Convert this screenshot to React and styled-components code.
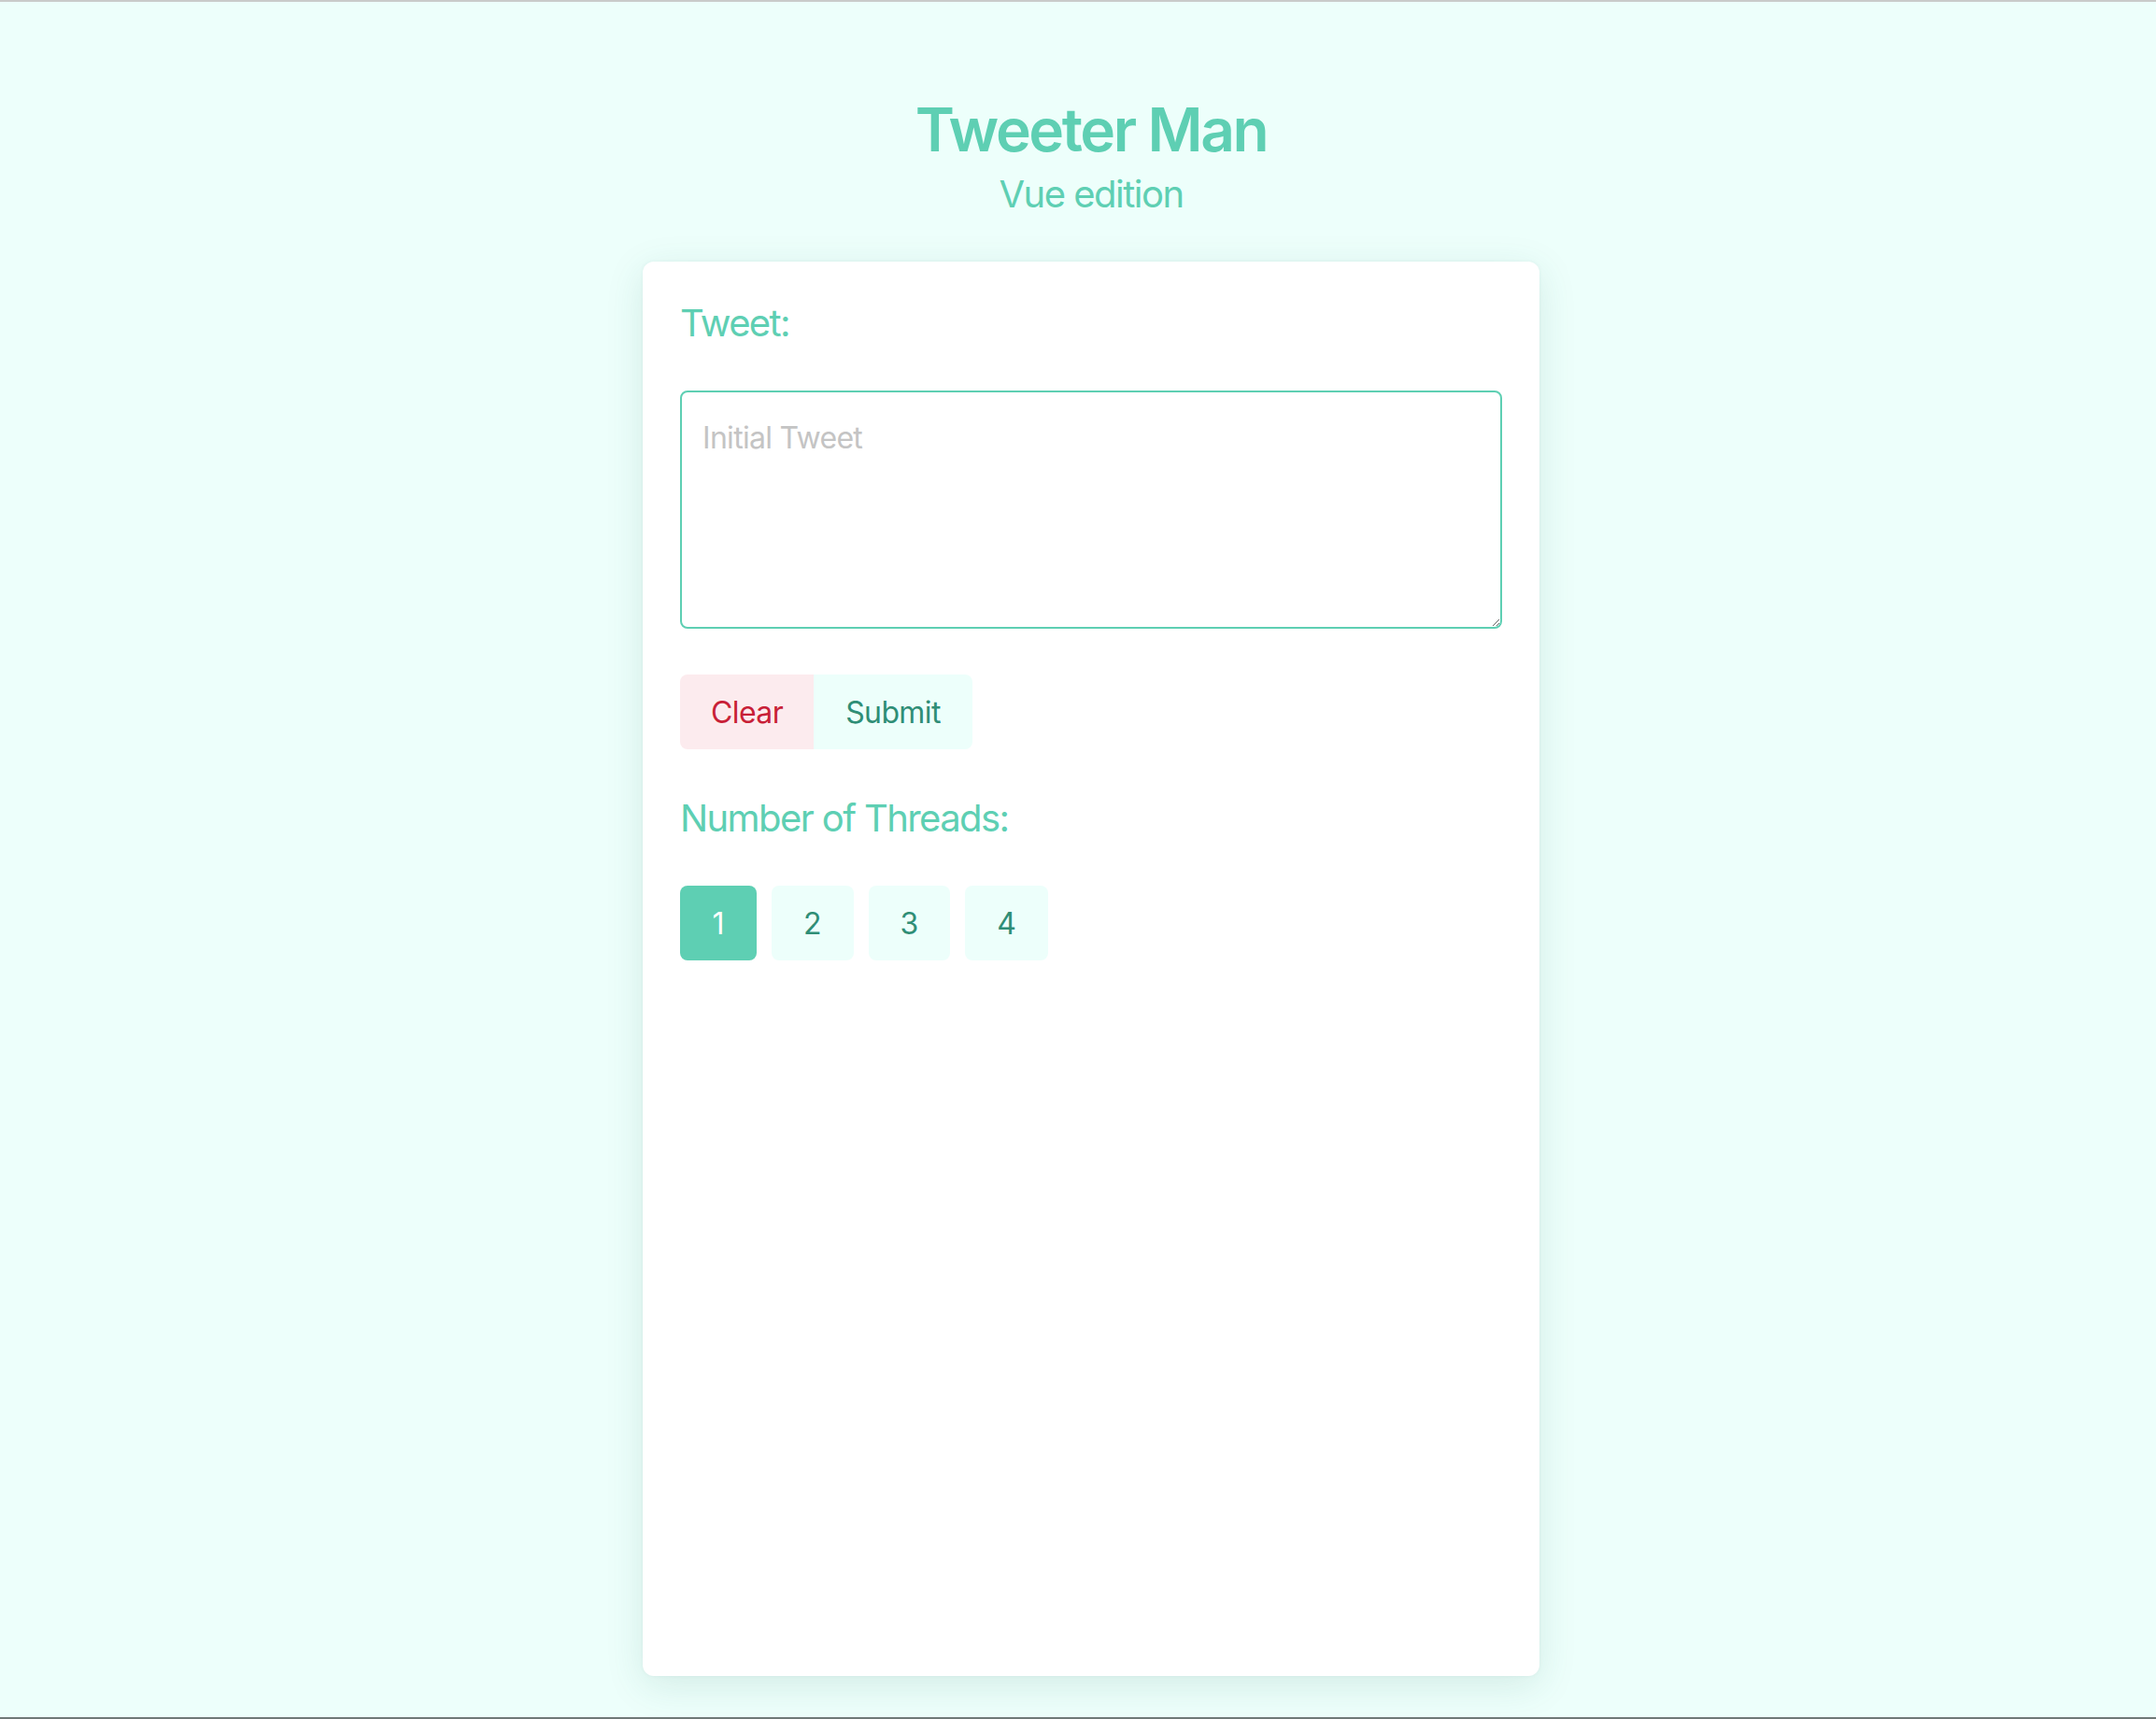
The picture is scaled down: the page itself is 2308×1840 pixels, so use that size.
import React, { useState } from "react";
import styled, { createGlobalStyle } from "styled-components";

const GlobalStyle = createGlobalStyle`
  html, body {
    margin: 0;
    padding: 0;
    background: #edfffb;
  }
  * { box-sizing: border-box; }
  body {
    font-family: Inter, "Noto Sans", "Liberation Sans", sans-serif;
  }
`;

const Page = styled.div`
  height: 100vh;
  border-top: 2px solid #c9cbca;
  border-bottom: 2px solid #6f7977;
  background: #edfffb;
  display: flex;
  flex-direction: column;
  align-items: center;
  padding: 99px 0 0 28px;
  overflow: hidden;
`;

const Title = styled.h1`
  margin: 0;
  font-size: 64px;
  line-height: 76px;
  font-weight: 600;
  color: #5ecfb3;
  letter-spacing: -2.4px;
`;

const Subtitle = styled.h2`
  margin: 7px 0 0;
  font-size: 40px;
  line-height: 48px;
  font-weight: 400;
  color: #5ecfb3;
  letter-spacing: -1.5px;
`;

const Card = styled.main`
  margin-top: 48px;
  width: 960px;
  height: 1514px;
  background: #ffffff;
  border-radius: 12px;
  box-shadow: 0 10px 40px rgba(40, 110, 95, 0.13), 0 0 4px rgba(40, 110, 95, 0.06);
  padding: 42px 40px 40px;
  display: flex;
  flex-direction: column;
  align-items: flex-start;
`;

const Label = styled.label`
  display: block;
  font-size: 40px;
  line-height: 48px;
  color: #5ecfb3;
  letter-spacing: -1.6px;
  margin: 0 0 ${(p) => p.$gap}px;
`;

const TweetBox = styled.textarea`
  width: 880px;
  height: 255px;
  border: 2px solid #5ecfb3;
  border-radius: 8px;
  padding: 29px 22px 20px;
  font-family: Inter, "Noto Sans", "Liberation Sans", sans-serif;
  font-size: 32px;
  line-height: 40px;
  letter-spacing: -0.7px;
  color: #333;
  outline: none;
  resize: vertical;
  margin: 0 0 49px;

  &::placeholder {
    color: #c4c4c4;
  }
`;

const ButtonGroup = styled.div`
  display: flex;
  margin-bottom: 50px;
`;

const ActionButton = styled.button`
  height: 80px;
  border: none;
  padding: 0 ${(p) => p.$pad}px;
  font-family: Inter, "Noto Sans", "Liberation Sans", sans-serif;
  font-size: 32px;
  letter-spacing: -0.6px;
  background: ${(p) => (p.$danger ? "#fcebee" : "#edfffb")};
  color: ${(p) => (p.$danger ? "#c81f37" : "#2f8e76")};
  border-radius: ${(p) => (p.$danger ? "8px 0 0 8px" : "0 8px 8px 0")};
  cursor: pointer;
`;

const ThreadRow = styled.div`
  display: flex;
  gap: 16px;
`;

const ThreadButton = styled.button`
  height: 80px;
  min-width: 82px;
  padding: 0 34px;
  border: none;
  border-radius: 8px;
  font-family: Inter, "Noto Sans", "Liberation Sans", sans-serif;
  font-size: 32px;
  background: ${(p) => (p.$active ? "#5ecfb3" : "#edfffb")};
  color: ${(p) => (p.$active ? "#ffffff" : "#2f8e76")};
  cursor: pointer;
`;

export default function App() {
  const [tweet, setTweet] = useState("");
  const [threads, setThreads] = useState(1);

  return (
    <>
      <GlobalStyle />
      <Page>
        <Title>Tweeter Man</Title>
        <Subtitle>Vue edition</Subtitle>
        <Card>
          <Label $gap={48}>Tweet:</Label>
          <TweetBox
            placeholder="Initial Tweet"
            value={tweet}
            onChange={(e) => setTweet(e.target.value)}
          />
          <ButtonGroup>
            <ActionButton $danger $pad={33} onClick={() => setTweet("")}>
              Clear
            </ActionButton>
            <ActionButton $pad={34}>Submit</ActionButton>
          </ButtonGroup>
          <Label $gap={48}>Number of Threads:</Label>
          <ThreadRow>
            {[1, 2, 3, 4].map((n) => (
              <ThreadButton key={n} $active={threads === n} onClick={() => setThreads(n)}>
                {n}
              </ThreadButton>
            ))}
          </ThreadRow>
        </Card>
      </Page>
    </>
  );
}
